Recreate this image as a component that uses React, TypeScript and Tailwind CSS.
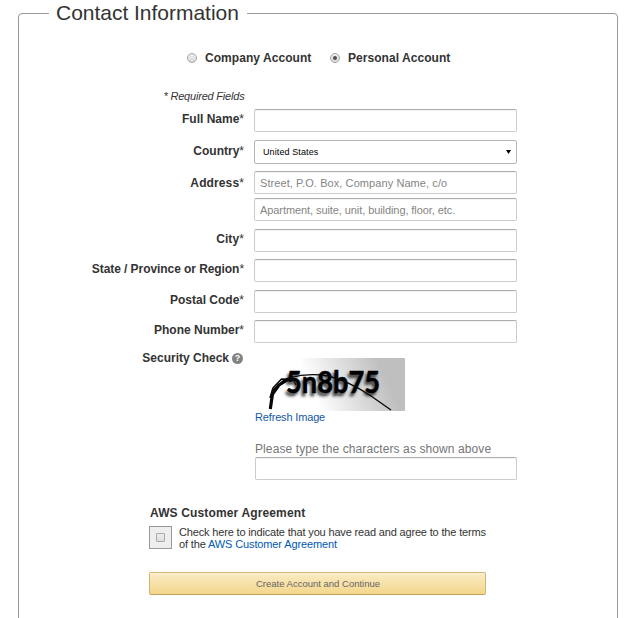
import React from 'react';

const inputClass =
  'block w-[263px] rounded-[2px] border border-[#ccc] border-t-[#adadad] bg-white px-[5px] text-[11px] text-[#333] shadow-[inset_0_1px_1px_rgba(0,0,0,0.05)] outline-none placeholder:text-[#858585]';

function Field({ label, className, labelClass, children }: {
  label: string;
  className: string;
  labelClass: string;
  children: React.ReactNode;
}) {
  return (
    <div className={`flex items-start ${className}`}>
      <label className={`w-[225px] shrink-0 text-right text-[12px] leading-[14px] font-bold ${labelClass}`}>
        {label}
        <span className="font-normal">*</span>
      </label>
      <div className="ml-[10px]">{children}</div>
    </div>
  );
}

function Radio({ checked }: { checked?: boolean }) {
  return (
    <span className="flex h-[10px] w-[10px] items-center justify-center rounded-full border border-[#a5a5a5] bg-linear-to-b from-[#eeeeee] to-[#d9d9d9]">
      {checked && <span className="h-[4px] w-[4px] rounded-full bg-[#505050]" />}
    </span>
  );
}

function Captcha() {
  return (
    <svg width="150" height="53" viewBox="0 0 150 53" className="block">
      <defs>
        <linearGradient id="fade" x1="0" x2="1" y1="0.15" y2="0">
          <stop offset="0.3" stopColor="#fff" />
          <stop offset="0.82" stopColor="#bfbfbf" />
        </linearGradient>
      </defs>
      <rect width="150" height="53" fill="url(#fade)" />
      <text
        x="31"
        y="34.5"
        textLength="94"
        lengthAdjust="spacingAndGlyphs"
        className="fill-black stroke-black stroke-[0.5px] font-['Lato',sans-serif] text-[31px] font-bold [text-shadow:-2px_3px_3px_rgba(0,0,0,0.7)]"
      >
        5n8b75
      </text>
      <g fill="none" stroke="#080808" strokeLinejoin="round">
        <path d="M15.3 51 L17.5 36 L24 27 L34 21" strokeWidth="3.2" />
        <path d="M15 40 L18 30 L26.5 21 L37 21.5" strokeWidth="1.6" />
        <path d="M17 33 L29 22 L38 18.5" strokeWidth="1.6" />
        <path d="M34 20 C48 16 62 16 73 18 C91 22 104 30 116 38 L136 52" strokeWidth="1.3" />
        <path d="M37 19 L41 27" strokeWidth="1.3" />
      </g>
    </svg>
  );
}

export default function App() {
  return (
    <div className="h-[618px] w-[625px] overflow-hidden bg-white font-['Liberation_Sans',Arial,sans-serif] text-[#333]">
      <fieldset className="ml-[18px] h-[640px] w-[600px] rounded-[4px] border border-[#999] px-0">
        <legend className="ml-[30px] h-[27px] w-[198px] pl-[7px] text-[21px] leading-[26px] tracking-[-0.02px] whitespace-nowrap">
          Contact Information
        </legend>

        <div className="mt-[24px] ml-[168px] flex h-[14px] items-center text-[12px] leading-[14px] font-bold tracking-[0.05px]">
          <Radio />
          <span className="ml-[8px] w-[125px]">Company Account</span>
          <Radio checked />
          <span className="ml-[8px]">Personal Account</span>
        </div>

        <p className="mt-[24px] w-[225.5px] text-right text-[11px] leading-[14px] tracking-[-0.2px] whitespace-nowrap italic">
          * Required Fields
        </p>

        <Field label="Full Name" className="mt-[6px]" labelClass="mt-[3px]">
          <input className={`${inputClass} h-[23px]`} />
        </Field>

        <Field label="Country" className="mt-[8px]" labelClass="mt-[4px]">
          <div className="flex h-[24px] w-[263px] items-center justify-between rounded-[2px] border border-[#b5b5b5] pr-[5px] pl-[8px] text-[9px] tracking-[0.1px] text-black">
            <span className="pt-px">United States</span>
            <svg width="5" height="4" viewBox="0 0 5 4"><path d="M0 0H5L2.5 4Z" fill="black" /></svg>
          </div>
        </Field>

        <Field label="Address" className="mt-[7px]" labelClass="mt-[5px] tracking-[0.12px]">
          <input className={`${inputClass} h-[23px] tracking-[0.08px]`} placeholder="Street, P.O. Box, Company Name, c/o" />
          <input className={`${inputClass} mt-[4px] h-[23px] tracking-[-0.08px]`} placeholder="Apartment, suite, unit, building, floor, etc." />
        </Field>

        <Field label="City" className="mt-[8px]" labelClass="mt-[3px] tracking-[0.1px]">
          <input className={`${inputClass} h-[23px]`} />
        </Field>
        <Field label="State / Province or Region" className="mt-[7px]" labelClass="mt-[3px] tracking-[-0.07px]">
          <input className={`${inputClass} h-[23px]`} />
        </Field>
        <Field label="Postal Code" className="mt-[8px]" labelClass="mt-[3px]">
          <input className={`${inputClass} h-[23px]`} />
        </Field>
        <Field label="Phone Number" className="mt-[7px]" labelClass="mt-[3px]">
          <input className={`${inputClass} h-[23px]`} />
        </Field>

        <div className="mt-[8px] flex items-start">
          <div className="flex w-[224px] items-center justify-end gap-[3px] text-[12px] leading-[14px] font-bold">
            Security Check
            <span className="flex h-[11px] w-[11px] items-center justify-center rounded-full bg-[#828282] text-[9px] leading-[11px] text-white">?</span>
          </div>
          <div className="mt-[7px] ml-[12px]">
            <Captcha />
            <a className="-mt-px block text-[11px] leading-[14px] tracking-[-0.16px] text-[#1458a8]">Refresh Image</a>
            <p className="mt-[18px] text-[12px] leading-[14px] tracking-[0.1px] text-[#767676]">
              Please type the characters as shown above
            </p>
            <input className={`${inputClass} mt-[1px] h-[23px] max-w-[262px]`} />
          </div>
        </div>

        <div className="mt-[26px] ml-[130px] w-[337px]">
          <h3 className="pl-px text-[12px] leading-[14px] font-bold tracking-[0.14px]">AWS Customer Agreement</h3>
          <div className="mt-[6px] flex">
            <span className="flex h-[23px] w-[23px] shrink-0 items-center justify-center border border-[#999] bg-[#eee]">
              <span className="h-[9px] w-[9px] rounded-[1px] border border-[#aaa] bg-linear-to-b from-[#eeeeee] to-[#dcdcdc]" />
            </span>
            <p className="ml-[7px] text-[11px] leading-[12px] tracking-[-0.165px] whitespace-nowrap">
              Check here to indicate that you have read and agree to the terms
              <br />
              <span className="tracking-[-0.13px]">
                of the <a className="text-[#0059b3]">AWS Customer Agreement</a>
              </span>
            </p>
          </div>
          <button className="mt-[22px] block h-[23px] w-[337px] rounded-[2px] border border-[#d4b56f] border-b-[#c2a05a] bg-linear-to-b from-[#faebc5] to-[#f4d78b] pl-px text-[9.5px] leading-[21px] text-[#666] shadow-[inset_0_1px_0_rgba(255,255,255,0.4)]">
            Create Account and Continue
          </button>
        </div>
      </fieldset>
    </div>
  );
}
